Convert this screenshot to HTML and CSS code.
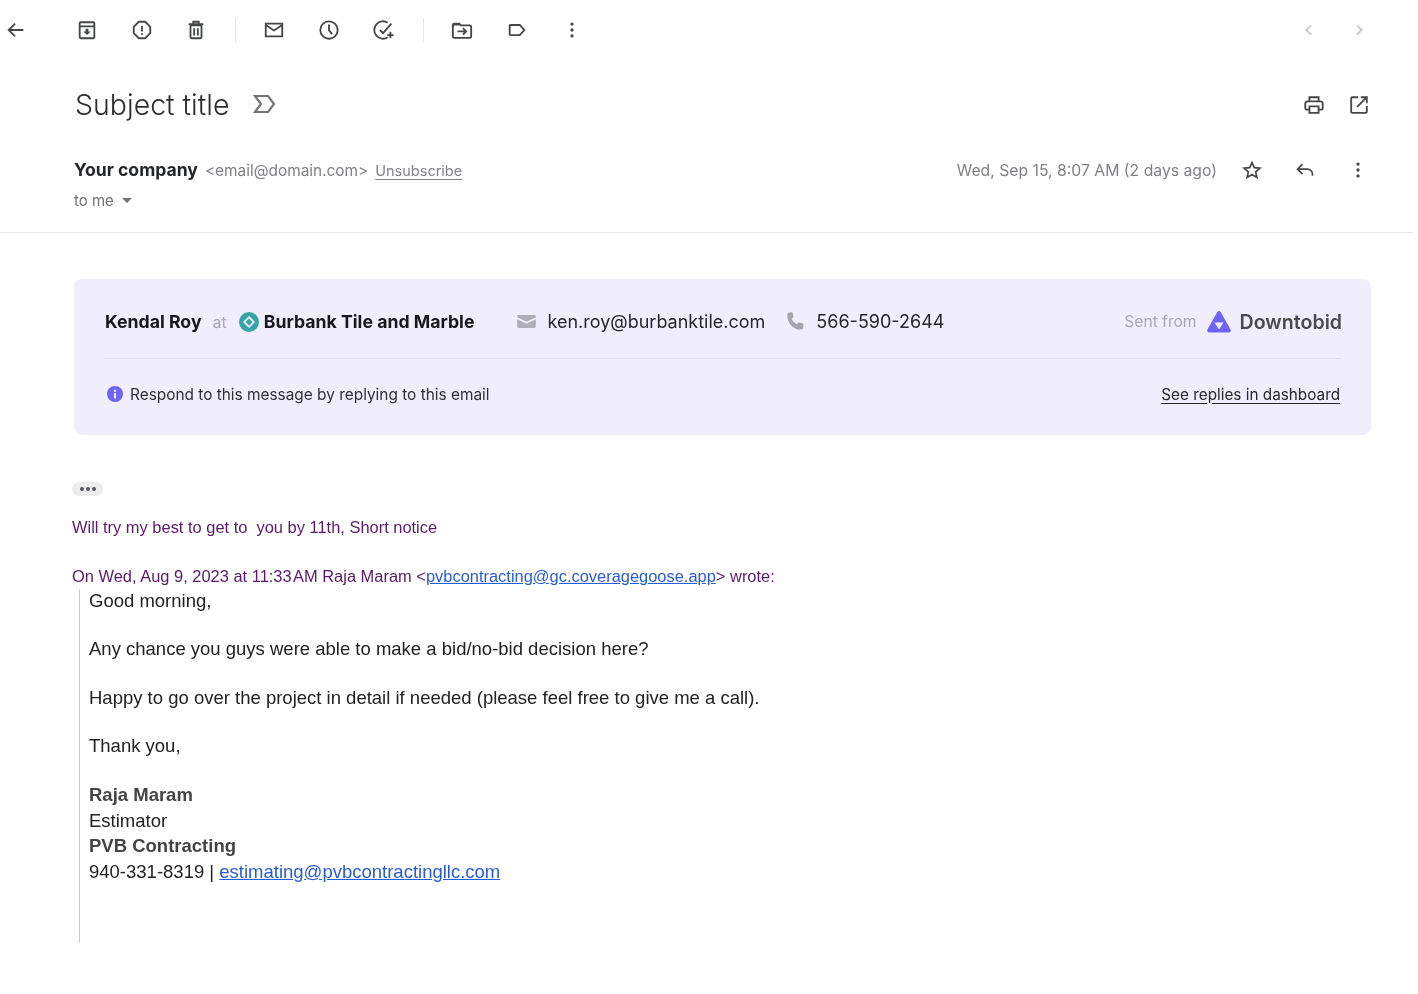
FILE: index.html
```html
<!DOCTYPE html>
<html lang="en">
<head>
    <meta charset="UTF-8">
    <title>Subject title</title>
    <link rel="stylesheet" href="styles.css">
</head>
<body>
<div class="page">
    <div class="toolbar">
        <svg class="icon back" viewBox="0 0 24 24"><path d="M20 12H5M11 5l-7 7 7 7"/></svg>
        <div class="tool-group first">
            <svg class="icon" viewBox="0 0 24 24"><path d="M4 8h16v12a1 1 0 0 1-1 1H5a1 1 0 0 1-1-1zM4 8V4.500a1 1 0 0 1 1-1h14a1 1 0 0 1 1 1V8"/><path class="fill" d="M10.500 10.500h3v3H16l-4 4-4-4h2.500z"/></svg>
            <svg class="icon" viewBox="0 0 24 24"><path d="M8.500 3h7L21 8.500v7L15.500 21h-7L3 15.500v-7z"/><path d="M12 7.500v6M12 15.500v2"/></svg>
            <svg class="icon" viewBox="0 0 24 24"><path d="M6 7h12v13a1 1 0 0 1-1 1H7a1 1 0 0 1-1-1zM4 5.500h16M9 5V3h6v2M10 10v8M14 10v8"/></svg>
        </div>
        <div class="tool-sep"></div>
        <div class="tool-group">
            <svg class="icon" viewBox="0 0 24 24"><path d="M3 5h18v14H3zM3 6.500l9 6 9-6"/></svg>
            <svg class="icon" viewBox="0 0 24 24"><circle cx="12" cy="12" r="9.500"/><path d="M12 6v6.500l3.500 4"/></svg>
            <svg class="icon" viewBox="0 0 24 24"><path d="M16 4a9.500 9.500 0 1 0 0 16M7.500 12l3.500 3.500L20 5M19 14v7M15.500 17.500h7"/></svg>
        </div>
        <div class="tool-sep"></div>
        <div class="tool-group">
            <svg class="icon" viewBox="0 0 24 24"><path class="fill" d="M2 6.500A1.500 1.500 0 0 1 3.500 5H9l2 2H3v2H2z"/><path d="M2 6.500A1.500 1.500 0 0 1 3.500 5H9l2 2h9.500A1.500 1.500 0 0 1 22 8.500V19a1.500 1.500 0 0 1-1.500 1.500h-17A1.500 1.500 0 0 1 2 19z"/><path d="M7 13.500h9M13 10l3.500 3.500L13 17"/></svg>
            <svg class="icon" viewBox="0 0 24 24"><path d="M5 6.500h10l5 5.500-5 5.500H5a1 1 0 0 1-1-1v-9a1 1 0 0 1 1-1z"/></svg>
            <svg class="icon dots" viewBox="0 0 24 24"><circle cx="12" cy="5.500" r="1.800"/><circle cx="12" cy="12" r="1.800"/><circle cx="12" cy="18.500" r="1.800"/></svg>
        </div>
        <div class="pager">
            <svg class="icon pale" viewBox="0 0 24 24"><path d="M15 5l-7 7 7 7"/></svg>
            <svg class="icon pale" viewBox="0 0 24 24"><path d="M9 5l7 7-7 7"/></svg>
        </div>
    </div>

    <div class="subject-row">
        <h1 class="subject">Subject title</h1>
        <svg class="label-mark" viewBox="0 0 24 24"><path d="M3 4h13l6 8-6 8H3l6-8z"/></svg>
        <div class="subject-actions">
            <svg class="icon" viewBox="0 0 24 24"><path d="M7 8V3.500h10V8M7 17H4a1.500 1.500 0 0 1-1.500-1.500v-5A2.500 2.500 0 0 1 5 8h14a2.500 2.500 0 0 1 2.500 2.500v5A1.500 1.500 0 0 1 20 17h-3"/><path d="M7 13.500h10v7H7z"/></svg>
            <svg class="icon" viewBox="0 0 24 24"><path d="M11 3.500H4.500a1 1 0 0 0-1 1v15a1 1 0 0 0 1 1h15a1 1 0 0 0 1-1V13M14 3.500h6.500V10M20.500 3.500L10 14"/></svg>
        </div>
    </div>

    <div class="sender">
        <div class="sender-main">
            <div class="sender-line">
                <span class="sender-name">Your company</span>
                <span class="sender-mail">&lt;email@domain.com&gt;</span>
                <a class="unsub" href="#">Unsubscribe</a>
            </div>
            <div class="to-me">to me <span class="caret"></span></div>
        </div>
        <div class="sender-side">
            <span class="date">Wed, Sep 15, 8:07 AM (2 days ago)</span>
            <svg class="icon small star" viewBox="0 0 24 24"><path d="M12 3l2.700 6.200 6.800.6-5.100 4.500 1.500 6.700L12 17.500 6.100 21l1.500-6.700-5.100-4.500 6.800-.6z"/></svg>
            <svg class="icon small" viewBox="0 0 24 24"><path d="M9 5l-6 6 6 6M3 11h12a6 6 0 0 1 6 6v2"/></svg>
            <svg class="icon dots" viewBox="0 0 24 24"><circle cx="12" cy="5.500" r="1.800"/><circle cx="12" cy="12" r="1.800"/><circle cx="12" cy="18.500" r="1.800"/></svg>
        </div>
    </div>

    <div class="card">
        <div class="card-top">
            <span class="person">Kendal Roy</span>
            <span class="at">at</span>
            <svg class="co-logo" viewBox="0 0 20 20"><circle class="co-bg" cx="10" cy="10" r="10"/><path class="co-mark" d="M10 5.200l4.800 4.800-4.800 4.800L5.200 10z"/></svg>
            <span class="company">Burbank Tile and Marble</span>
            <svg class="mail-ico" viewBox="0 0 20 14"><path d="M1.500 0h17A1.500 1.500 0 0 1 20 1.500v.8l-10 5-10-5v-.8A1.500 1.500 0 0 1 1.500 0z"/><path d="M0 4.500l10 5 10-5v8A1.500 1.500 0 0 1 18.500 14h-17A1.500 1.500 0 0 1 0 12.500z"/></svg>
            <span class="contact">ken.roy@burbanktile.com</span>
            <svg class="phone-ico" viewBox="0 0 20 20"><path d="M4.500 0.500L7 .2c.6 0 1 .3 1.100.8l.9 3.700c.1.500-.1.900-.5 1.200L7 7c.8 2.600 3 4.900 5.800 5.900l1.100-1.500c.3-.4.800-.6 1.300-.4l3.600 1c.5.100.8.600.7 1.100l-.4 3.600c-.1 1-1 1.800-2 1.800C8 18.500 1.800 11 2.500 2.500c.1-1 1-1.900 2-2z"/></svg>
            <span class="contact">566-590-2644</span>
            <span class="sent-from">Sent from</span>
            <svg class="dtb-logo" viewBox="0 0 24 22"><path fill-rule="evenodd" d="M10.300 1a2 2 0 0 1 3.400 0l9.800 17.500a2 2 0 0 1-1.700 3H2.200a2 2 0 0 1-1.700-3zM7.500 11.500h9L12 18.500z"/></svg>
            <span class="dtb-name">Downtobid</span>
        </div>
        <div class="card-bottom">
            <svg class="info-ico" viewBox="0 0 16 16"><circle cx="8" cy="8" r="8"/><rect class="info-mark" x="7" y="7" width="2" height="5.500" rx=".6"/><circle class="info-mark" cx="8" cy="4.700" r="1.200"/></svg>
            <span class="respond">Respond to this message by replying to this email</span>
            <a class="replies" href="#">See replies in dashboard</a>
        </div>
    </div>

    <div class="message">
        <div class="ellipsis"><i></i><i></i><i></i></div>
        <p class="reply-text">Will try my best to get to &nbsp;you by 11th, Short notice</p>
        <p class="reply-head">On Wed, Aug 9, 2023 at 11:33&#8202;AM Raja Maram &lt;<a href="#">pvbcontracting@gc.coveragegoose.app</a>&gt; wrote:</p>
        <blockquote class="quote">
            <p>Good morning,</p>
            <p>Any chance you guys were able to make a bid/no-bid decision here?</p>
            <p>Happy to go over the project in detail if needed (please feel free to give me a call).</p>
            <p>Thank you,</p>
            <div class="signature">
                <div class="strong">Raja Maram</div>
                <div>Estimator</div>
                <div class="strong">PVB Contracting</div>
                <div>940-331-8319 | <a href="#">estimating@pvbcontractingllc.com</a></div>
            </div>
        </blockquote>
    </div>
</div>
</body>
</html>
```
FILE: styles.css
```css
* {
    box-sizing: border-box;
}
body {
    margin: 0;
    background-color: #fff;
    font-family: Inter, "Liberation Sans", sans-serif;
    color: #202124;
}
/* the reference is a soft, upscaled capture */
.page {
    width: 1413px;
    height: 994px;
    overflow: hidden;
    filter: blur(0.4px);
}
.icon {
    width: 22px;
    height: 22px;
    flex: none;
    fill: none;
    stroke: #444746;
    stroke-width: 2;
}
.icon .fill {
    fill: #444746;
    stroke: none;
}
.icon.dots {
    fill: #444746;
    stroke: none;
}
.icon.small {
    width: 20px;
    height: 20px;
}
.icon.star {
    margin-right: 1px;
}
.icon.pale {
    stroke: #c9cacb;
    width: 16px;
    height: 16px;
    stroke-width: 3;
}

/* top toolbar */
.toolbar {
    display: flex;
    align-items: center;
    height: 30px;
    margin-top: 15px;
    padding-left: 5px;
    padding-right: 46px;
}
.tool-group {
    display: flex;
    align-items: center;
    gap: 33px;
}
.tool-group.first {
    gap: 32.500px;
    margin-left: 49px;
}
.tool-sep {
    width: 1px;
    height: 25px;
    background-color: #e4e5e6;
    margin: 0 27px 0 28px;
}
.pager {
    display: flex;
    gap: 34px;
    margin-left: auto;
}

/* subject */
.subject-row {
    display: flex;
    align-items: center;
    height: 40px;
    margin-top: 39px;
    padding-left: 75px;
    padding-right: 43px;
}
.subject {
    margin: 0;
    font-size: 28.500px;
    font-weight: 300;
    color: #2c2d30;
}
.label-mark {
    width: 24px;
    height: 24px;
    margin-left: 23px;
    fill: none;
    stroke: #74757a;
    stroke-width: 2.200;
}
.subject-actions {
    display: flex;
    gap: 23px;
    margin-top: 1px;
    margin-left: auto;
}

/* sender */
.sender {
    display: flex;
    justify-content: space-between;
    height: 75px;
    margin-top: 34px;
    padding-left: 74px;
    padding-right: 44px;
    border-bottom: 1px solid #e3e3e5;
}
.sender-line {
    display: flex;
    align-items: baseline;
    gap: 7px;
    height: 24px;
    line-height: 24px;
}
.sender-name {
    font-size: 17.600px;
    font-weight: 700;
    color: #25262a;
}
.sender-mail {
    font-size: 15.400px;
    color: #808186;
}
.unsub {
    font-size: 14.500px;
    color: #808186;
    text-decoration: underline;
    text-underline-offset: 3px;
}
.to-me {
    display: flex;
    align-items: center;
    gap: 8px;
    margin-top: 9px;
    font-size: 15px;
    color: #717276;
}
.caret {
    width: 0;
    height: 0;
    border-left: 5px solid transparent;
    border-right: 5px solid transparent;
    border-top: 5px solid #717276;
}
.sender-side {
    display: flex;
    align-items: center;
    height: 24px;
    gap: 32px;
}
.date {
    font-size: 15.750px;
    color: #808186;
    margin-right: -7px;
}

/* purple card */
.card {
    margin: 46px 42px 0 74px;
    height: 156px;
    padding: 0 30px;
    background-color: #f0eefd;
    border-radius: 8px;
}
.card-top {
    display: flex;
    align-items: center;
    height: 80px;
    padding-top: 6px;
    border-bottom: 1px solid #e2e0ef;
}
.person, .company {
    font-size: 17.700px;
    font-weight: 700;
    color: #17171c;
}
.person {
    margin-left: 1px;
}
.at {
    font-size: 16px;
    color: #a9a9b3;
    margin-left: 11px;
}
.co-logo {
    width: 20px;
    height: 20px;
    margin-left: 12px;
}
.co-bg {
    fill: #35a5a8;
}
.co-mark {
    fill: none;
    stroke: #f0eefd;
    stroke-width: 1.800;
}
.company {
    margin-left: 5px;
}
.mail-ico {
    width: 19px;
    height: 13px;
    margin-left: 43px;
    fill: #aeaeb8;
}
.contact {
    font-size: 18px;
    color: #26262c;
    margin-left: 11px;
}
.phone-ico {
    width: 19px;
    height: 19px;
    margin-left: 20px;
    margin-right: 1px;
    fill: #a5a5ae;
}
.sent-from {
    margin-left: auto;
    font-size: 15.600px;
    color: #a9a9b3;
}
.dtb-logo {
    width: 24px;
    height: 22px;
    margin-left: 10px;
    fill: #6d63f5;
}
.dtb-name {
    margin-left: 9px;
    margin-right: -1px;
    font-size: 19.600px;
    font-weight: 600;
    color: #4a4a50;
}
.card-bottom {
    display: flex;
    align-items: center;
    height: 70px;
    padding: 0 1px 0 3px;
}
.info-ico {
    width: 16px;
    height: 16px;
    fill: #6d63f5;
}
.info-mark {
    fill: #f0eefd;
}
.respond {
    margin-left: 7px;
    font-size: 15.400px;
    color: #2f2f35;
}
.replies {
    margin-left: auto;
    font-size: 15.300px;
    color: #26262c;
    text-decoration: underline;
    text-underline-offset: 3px;
}

/* message body */
.message {
    padding-left: 72px;
    font-family: "Liberation Sans", Arial, sans-serif;
}
.message a {
    color: #2a5bd7;
}
.ellipsis {
    display: flex;
    justify-content: center;
    align-items: center;
    gap: 2px;
    width: 31px;
    height: 14px;
    margin-top: 47px;
    background-color: #ececec;
    border-radius: 7px;
}
.ellipsis i {
    width: 4px;
    height: 4px;
    border-radius: 50%;
    background-color: #55565a;
}
.reply-text, .reply-head {
    margin: 0;
    font-size: 16.450px;
    line-height: 24px;
    color: #5b1a68;
}
.reply-text {
    margin-top: 19px;
}
.reply-head {
    margin-top: 25px;
}
.quote {
    margin: 1px 0 0 7px;
    height: 354px;
    padding-left: 9px;
    border-left: 1px solid #cccccc;
    font-size: 18.500px;
    line-height: 24.200px;
    color: #222;
}
.quote p {
    margin: 0 0 24.200px;
}
.signature {
    margin-top: -0.500px;
    line-height: 25.600px;
}
.strong {
    font-weight: 700;
    color: #444;
}
```
